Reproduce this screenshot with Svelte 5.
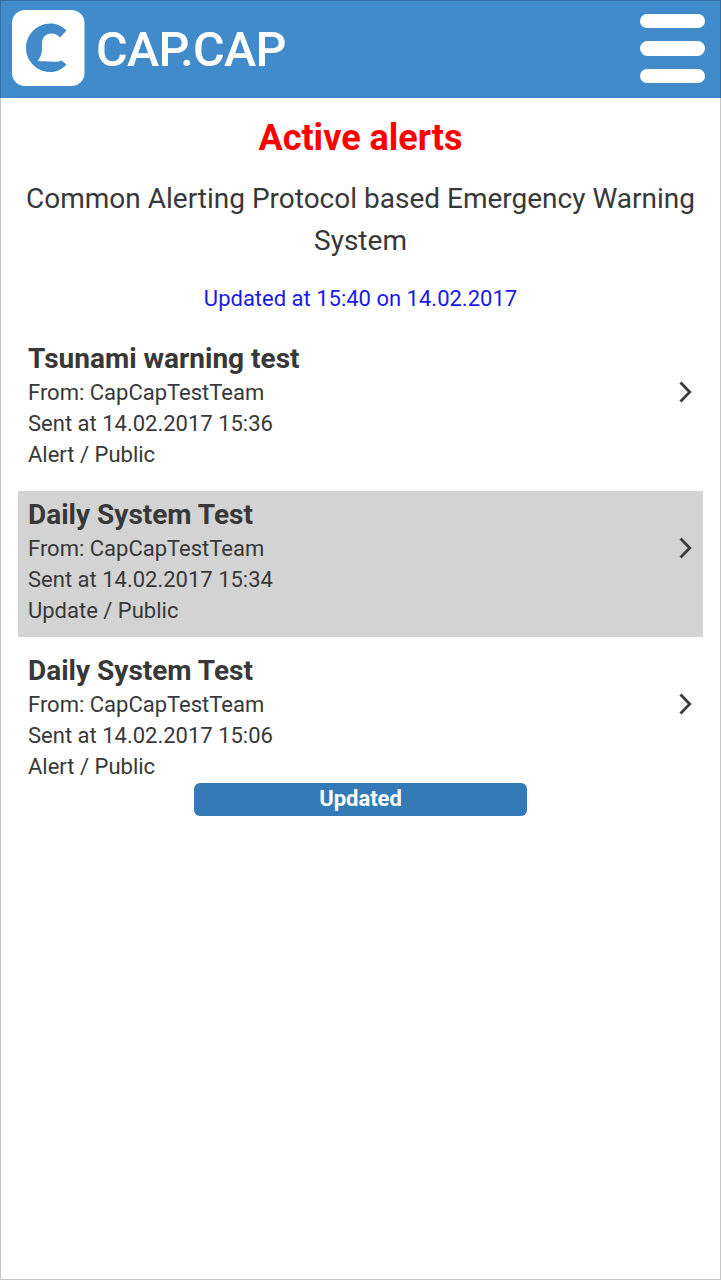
<script>
    let selected = $state(1);

    const updatedAt = "15:40 on 14.02.2017";

    const alerts = [
        { title: "Tsunami warning test", from: "CapCapTestTeam", sent: "14.02.2017 15:36", type: "Alert", scope: "Public" },
        { title: "Daily System Test", from: "CapCapTestTeam", sent: "14.02.2017 15:34", type: "Update", scope: "Public" },
        { title: "Daily System Test", from: "CapCapTestTeam", sent: "14.02.2017 15:06", type: "Alert", scope: "Public" }
    ];
</script>

<div class="screen">
    <header>
        <svg class="logo" viewBox="0 0 73 76" aria-hidden="true">
            <rect width="72.500" height="76" rx="13" fill="#fff" />
            <path
                fill="#428bca"
                d="M54.500 20.500C50 16 44.500 13.500 38.500 13.500C25 13.500 14 24.500 14 38C14 51.500 25 62 38.500 62C44.500 62 50 59.500 54.500 54.500L49.500 50.500C47 52 43 52 39 51.500C35 51.500 30 51.200 25.500 51C28.500 48 29.500 44 30 40L30 34C30 27 34 23.500 39 23.500C43 23.500 45.500 25 48 27.500Z"
            />
        </svg>
        <span class="brand">CAP.CAP</span>
        <button class="menu" aria-label="Menu">
            <span></span>
            <span></span>
            <span></span>
        </button>
    </header>

    <main>
        <h1>Active alerts</h1>
        <p class="intro">Common Alerting Protocol based Emergency Warning System</p>
        <p class="updated">Updated at {updatedAt}</p>

        <ul>
            {#each alerts as alert, i}
                <li>
                    <button class="alert" class:selected={selected === i} onclick={() => (selected = i)}>
                        <span class="details">
                            <strong>{alert.title}</strong>
                            <span>From: {alert.from}</span>
                            <span>Sent at {alert.sent}</span>
                            <span>{alert.type} / {alert.scope}</span>
                        </span>
                        <svg class="chevron" viewBox="0 0 14 24" aria-hidden="true">
                            <path d="M1.500 2.500L10.700 12L1.500 21.500" fill="none" stroke="#3c3c3c" stroke-width="2.800" />
                        </svg>
                    </button>
                </li>
            {/each}
        </ul>

        <div class="toast">Updated</div>
    </main>
</div>

<style>
    :global(body) {
        margin: 0;
        background: #fff;
    }

    .screen {
        position: relative;
        box-sizing: border-box;
        min-height: 1280px;
        font-family: Roboto, sans-serif;
        color: #383838;
        background: #fefefe;
    }

    /* thin frame drawn over the header as well */
    .screen::after {
        content: "";
        position: absolute;
        inset: 0;
        border: 1px solid rgba(0, 0, 0, 0.22);
        pointer-events: none;
    }

    header {
        box-sizing: border-box;
        height: 98px;
        padding: 0 16px 2px 12px;
        display: flex;
        align-items: center;
        background: #428bca;
    }

    .logo {
        width: 73px;
        height: 76px;
    }

    .brand {
        flex: 1;
        margin-left: 11px;
        padding-top: 3px;
        font-size: 48.500px;
        font-weight: 500;
        line-height: 60px;
        letter-spacing: -0.700px;
        color: #fff;
    }

    button {
        font: inherit;
        color: inherit;
        border: 0;
        background: none;
        cursor: pointer;
    }

    .menu {
        padding: 1px 0 0;
        display: flex;
        flex-direction: column;
        gap: 13px;
    }

    .menu span {
        width: 65px;
        height: 14.500px;
        border-radius: 8px;
        background: #fff;
    }

    main {
        padding: 0 18px;
        display: flex;
        flex-direction: column;
    }

    h1 {
        margin: 19px 0 18px;
        font-size: 36px;
        font-weight: 700;
        line-height: 43px;
        text-align: center;
        color: #f00;
    }

    .intro {
        margin: 0;
        font-size: 28px;
        line-height: 42px;
        text-align: center;
    }

    .updated {
        margin: 20px 0 19px;
        font-size: 22px;
        line-height: 34px;
        text-align: center;
        color: #1a1ae6;
    }

    ul {
        margin: 0;
        padding: 0;
        list-style: none;
        display: flex;
        flex-direction: column;
        gap: 10px;
    }

    .alert {
        box-sizing: border-box;
        width: 100%;
        height: 146px;
        padding: 5px 10px 0;
        display: flex;
        align-items: flex-start;
        justify-content: space-between;
        text-align: left;
    }

    .selected {
        background: #d3d3d3;
    }

    .details {
        display: flex;
        flex-direction: column;
        font-size: 22px;
        line-height: 31.200px;
    }

    .details strong {
        font-size: 28px;
        line-height: 37px;
    }

    .chevron {
        width: 14px;
        height: 24px;
        margin-top: 40px;
    }

    .toast {
        align-self: center;
        box-sizing: border-box;
        width: 333px;
        height: 33px;
        margin-top: -10px;
        border-radius: 6px;
        font-size: 22px;
        font-weight: 700;
        line-height: 31px;
        text-align: center;
        color: #fff;
        background: #337ab7;
    }
</style>
